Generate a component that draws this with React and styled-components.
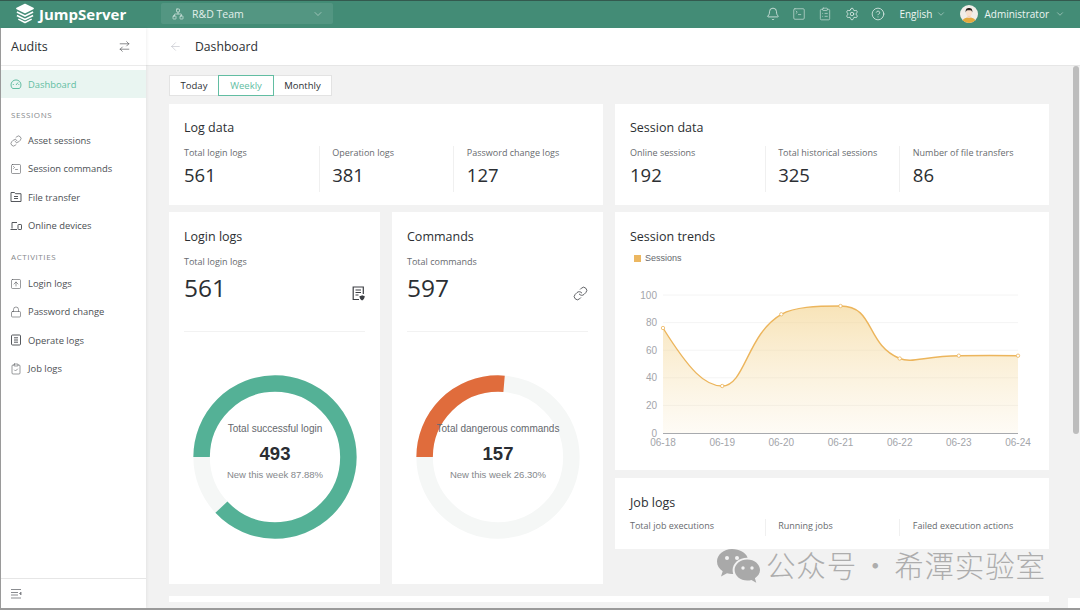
import styled, { createGlobalStyle } from "styled-components";
import {
  ArrowLeft,
  ArrowRightLeft,
  Bell,
  ChevronDown,
  CircleHelp,
  ClipboardCheck,
  ClipboardList,
  Link,
  Lock,
  Network,
  Settings,
  SquareArrowUp,
  SquareTerminal,
} from "lucide-react";

const GlobalStyle = createGlobalStyle`
  html, body {
    margin: 0;
    padding: 0;
    height: 100%;
    overflow: hidden;
    background: #f2f2f2;
  }
  * { box-sizing: border-box; }
  body {
    font-family: "Open Sans", "Noto Sans", sans-serif;
    color: #2c2f33;
  }
`;

const Frame = styled.div`
  position: relative;
  width: 1080px;
  height: 610px;
  display: flex;
  flex-direction: column;
  overflow: hidden;
  border-bottom: 2px solid #9a9a9a;
  background: #f2f2f2;
`;

const TopBar = styled.header`
  flex: 0 0 28px;
  display: flex;
  align-items: center;
  padding: 0 15px 2px 15px;
  background: #438c76;
  border-top: 1px solid #33594e;
  color: #fff;
`;

const Brand = styled.div`
  width: 146px;
  display: flex;
  align-items: center;
  gap: 4px;
  font-size: 15px;
  font-weight: 700;
`;

const TeamSelect = styled.div`
  width: 172px;
  height: 21px;
  display: flex;
  align-items: center;
  padding: 0 9px 0 11px;
  gap: 8px;
  border-radius: 2px;
  background: rgba(255, 255, 255, 0.09);
  font-size: 10.5px;
  color: #e2efeb;
  & span { flex: 1; }
`;

const TopActions = styled.div`
  margin-left: auto;
  display: flex;
  align-items: center;
`;

const TopIcon = styled.span`
  width: 26.4px;
  display: flex;
  justify-content: center;
  color: #e8f2ef;
`;

const TopText = styled.span`
  font-size: 10px;
  color: #eef6f3;
`;

const Lang = styled.div`
  display: flex;
  align-items: center;
  gap: 4px;
  margin-left: 8px;
  margin-right: 14px;
`;

const User = styled.div`
  display: flex;
  align-items: center;
  gap: 6px;
  & svg:last-child { margin-left: 0; }
`;

const Body = styled.div`
  flex: 1;
  min-height: 0;
  display: flex;
`;

const Sidebar = styled.aside`
  flex: 0 0 146px;
  display: flex;
  flex-direction: column;
  background: #fff;
  border-left: 1px solid #9a9a9a;
  box-shadow: 1px 0 3px rgba(0, 0, 0, 0.06);
  z-index: 1;
`;

const SideHead = styled.div`
  flex: 0 0 38px;
  display: flex;
  align-items: center;
  justify-content: space-between;
  padding: 0 15px 0 10px;
  border-bottom: 1px solid #ebebeb;
  font-size: 12.5px;
  color: #2c2f33;
`;

const SideNav = styled.nav`
  flex: 1;
  padding-top: 4px;
`;

const NavItem = styled.div`
  height: 28.4px;
  display: flex;
  align-items: center;
  gap: 6px;
  padding-left: 9px;
  font-size: 9.4px;
  color: ${(p) => (p.$active ? "#62bda2" : "#4c4f54")};
  background: ${(p) => (p.$active ? "#e9f5f1" : "transparent")};
`;

const NavGroup = styled.div`
  height: ${(p) => p.$h}px;
  display: flex;
  align-items: flex-end;
  padding: 0 0 ${(p) => p.$pb}px 10px;
  font-size: 8px;
  letter-spacing: 0.6px;
  color: #85888c;
`;

const SideFoot = styled.div`
  flex: 0 0 30px;
  display: flex;
  align-items: center;
  padding-left: 10px;
  border-top: 1px solid #e6e6e6;
`;

const Main = styled.main`
  flex: 1;
  min-width: 0;
  display: flex;
  flex-direction: column;
`;

const PageHead = styled.div`
  flex: 0 0 38px;
  display: flex;
  align-items: center;
  gap: 13px;
  padding-left: 23px;
  background: #fff;
  border-bottom: 1px solid #e6e6e6;
  font-size: 12.2px;
  color: #2c2f33;
`;

const Content = styled.div`
  flex: 1;
  min-height: 0;
  padding: 9px 31px 0 23px;
`;

const Tabs = styled.div`
  display: flex;
  height: 21px;
  margin-bottom: 8px;
`;

const Tab = styled.div`
  width: ${(p) => p.$w}px;
  display: flex;
  align-items: center;
  justify-content: center;
  font-size: 9.5px;
  background: #fff;
  color: ${(p) => (p.$active ? "#62bda2" : "#2c2f33")};
  border: 1px solid ${(p) => (p.$active ? "#62bda2" : "#e3e3e3")};
  margin-left: ${(p) => (p.$first ? 0 : -1)}px;
  position: relative;
  z-index: ${(p) => (p.$active ? 1 : 0)};
`;

const Columns = styled.div`
  display: grid;
  grid-template-columns: 434px 434px;
  gap: 12px;
`;

const Column = styled.div`
  display: flex;
  flex-direction: column;
  gap: 7px;
`;

const Card = styled.section`
  background: #fff;
  padding: ${(p) => p.$pt || 15}px 15px 15px;
  height: ${(p) => p.$h}px;
`;

const JobCard = styled(Card)`
  margin-top: 1px;
`;

const CardTitle = styled.h3`
  margin: 0;
  font-size: 12.5px;
  line-height: 17px;
  font-weight: 400;
  color: #2c2f33;
`;

const StatGrid = styled.div`
  display: grid;
  grid-template-columns: repeat(3, 1fr);
  margin-top: ${(p) => (p.$short ? 8 : 10)}px;
`;

const Stat = styled.div`
  height: ${(p) => (p.$short ? 17 : 46)}px;
  & + & {
    padding-left: 12.5px;
    border-left: 1px solid #f0f0f0;
  }
`;

const StatLabel = styled.div`
  font-size: 9px;
  line-height: 13px;
  color: #676a6e;
`;

const StatValue = styled.div`
  margin-top: 3px;
  font-size: 18.5px;
  line-height: 26px;
  color: #2c2f33;
`;

const DonutRow = styled.div`
  display: grid;
  grid-template-columns: 211px 211px;
  gap: 12px;
`;

const DonutHead = styled.div`
  position: relative;
  height: 104px;
  border-bottom: 1px solid #f2f2f2;
`;

const HeadLabel = styled(StatLabel)`
  margin-top: 10px;
`;

const BigValue = styled.div`
  margin-top: 3px;
  font-size: 24.5px;
  line-height: 34px;
  color: #2c2f33;
`;

const CornerIcon = styled.span`
  position: absolute;
  right: 0;
  top: 58px;
  display: flex;
  color: #3c3f44;
`;

const DonutWrap = styled.div`
  position: relative;
  width: 164px;
  height: 164px;
  margin: 43px auto 0;
  left: 0.5px;
`;

const DonutText = styled.div`
  position: absolute;
  inset: 0;
  padding-top: 2px;
  display: flex;
  flex-direction: column;
  align-items: center;
  justify-content: center;
  font-family: "Liberation Sans", Arial, sans-serif;
  white-space: nowrap;
`;

const DonutLabel = styled.div`
  font-size: 10px;
  line-height: 12px;
  color: #65686d;
  margin-top: -13px;
`;

const DonutNumber = styled.div`
  font-size: 18.5px;
  font-weight: 700;
  line-height: 22px;
  margin-top: 8px;
  color: #2a2d32;
`;

const DonutSub = styled.div`
  font-size: 9.5px;
  line-height: 12px;
  margin-top: 4px;
  color: #85888c;
`;

const Legend = styled.div`
  display: flex;
  align-items: center;
  gap: 4px;
  margin-top: 7px;
  font-family: "Liberation Sans", Arial, sans-serif;
  font-size: 9px;
  line-height: 12px;
  color: #65686d;
  & i {
    width: 7px;
    height: 7px;
    background: #ecb761;
    margin-left: 4px;
  }
`;

const ChartBox = styled.svg`
  display: block;
  margin: 11px 0 0 -15px;
  font-family: "Liberation Sans", Arial, sans-serif;
`;

const BottomCard = styled.div`
  height: 6px;
  margin-top: 12px;
  background: #fff;
`;

const ScrollThumb = styled.div`
  position: absolute;
  right: 1px;
  top: 66px;
  width: 6px;
  height: 368px;
  border-radius: 3px;
  background: #bdbdbd;
`;

const ScrollCorner = styled.div`
  position: absolute;
  right: 0;
  bottom: 0;
  width: 12px;
  height: 10px;
  background: #fff;
`;

const Watermark = styled.div`
  position: absolute;
  left: 717px;
  top: 542px;
  display: flex;
  align-items: center;
  gap: 6px;
  font-family: "Noto Sans CJK SC", sans-serif;
  font-weight: 300;
  font-size: 29.5px;
  letter-spacing: 0.85px;
  word-spacing: -4px;
  line-height: 40px;
  color: #adadad;
  white-space: nowrap;
  & svg { margin-top: 7px; }
`;

const iconProps = { strokeWidth: 1.3 };
const navIconProps = { size: 12, strokeWidth: 1.2 };

const LogoMark = () => (
  <svg width="20" height="21" viewBox="0 0 21 21" fill="none" stroke="#fff" strokeWidth="1.7" strokeLinejoin="round">
    <path d="M10.5 1 19 5.200 10.500 9.400 2 5.200Z" fill="#fff" />
    <path d="M2 9 10.500 13.200 19 9" />
    <path d="M2 12.600 10.500 16.800 19 12.600" />
    <path d="M3.500 16.400 10.500 20 17.500 16.400" />
  </svg>
);

const Avatar = () => (
  <svg width="18" height="18" viewBox="0 0 18 18">
    <clipPath id="av">
      <circle cx="9" cy="9" r="9" />
    </clipPath>
    <g clipPath="url(#av)">
      <rect width="18" height="18" fill="#f1ede8" />
      <path d="M2 18c0-4 3-5.500 7-5.500s7 1.500 7 5.500Z" fill="#e3a93e" />
      <rect x="7.500" y="9.500" width="3" height="3.500" fill="#f3d2bb" />
      <ellipse cx="9" cy="7.500" rx="3" ry="3.600" fill="#f8e0cf" />
      <path d="M5.700 7.500C5.300 3.800 7 3 9 3s3.700.8 3.300 4.500c-.4-1.600-1-2.300-1.800-2.300H7.500c-.8 0-1.400.7-1.800 2.300Z" fill="#2b2320" />
    </g>
  </svg>
);

const DashIcon = ({ color }) => (
  <svg width="12" height="12" viewBox="0 0 12 12" fill="none" stroke={color} strokeWidth="1">
    <path d="M2.500 10.500a5 5 0 1 1 7 0Z" strokeLinejoin="round" />
    <path d="M6 7 8 4.500M2.800 6.500H3.800M8.400 6.500H9.300" />
  </svg>
);

const FolderIcon = ({ color }) => (
  <svg width="12" height="12" viewBox="0 0 12 12" fill="none" stroke={color} strokeWidth="1">
    <path d="M1 1.500H4.500L5.500 2.700H11V10.500H1Z" strokeLinejoin="round" />
    <path d="M4 5.500H8M4 7.500H8" />
  </svg>
);

const DevicesIcon = ({ color }) => (
  <svg width="12" height="12" viewBox="0 0 12 12" fill="none" stroke={color} strokeWidth="1">
    <path d="M7 2.500H2V8.500M0.500 9.500H7" />
    <rect x="8" y="4.500" width="3.500" height="5" rx="0.600" />
  </svg>
);

const OperateIcon = ({ color }) => (
  <svg width="12" height="12" viewBox="0 0 12 12" fill="none" stroke={color} strokeWidth="1">
    <rect x="1.500" y="1" width="9" height="10" rx="1" />
    <path d="M4 3.800H8M4 6H8M4 8.200H8" />
  </svg>
);

const CollapseIcon = () => (
  <svg width="11" height="11" viewBox="0 0 11 11" fill="none" stroke="#8a8c90" strokeWidth="1">
    <path d="M0 1.500H10M0 4.500H7M0 7H7M0 10H10" />
    <path d="M10 4 8.500 5.500 10 7Z" fill="#6c6f74" />
  </svg>
);

const LogBadgeIcon = () => (
  <svg width="13" height="15" viewBox="0 0 13 15" fill="none" stroke="#3c3f44" strokeWidth="1.200">
    <path d="M7 13.500H1.200V1H11.300V8" />
    <path d="M3.500 4H9M3.500 6.500H9M3.500 9H6.500" />
    <path d="M7.500 10c1.300 0 2.200-.4 2.700-.8.500.4 1.400.8 2.500.8 0 2-1 3.800-2.600 4.500C8.500 13.800 7.500 12 7.500 10Z" fill="#3c3f44" stroke="none" />
  </svg>
);

const WeChatIcon = () => (
  <svg width="43" height="36" viewBox="0 0 43 36" fill="#a9a9a9">
    <path d="M15 0C6.700 0 0 5.600 0 12.500c0 4 2.200 7.400 5.700 9.700L4 27.500l6-3.200c1.600.5 3.300.7 5 .7l1.200-.1c-.4-1.200-.6-2.500-.6-3.800 0-6.900 6.500-12.400 14.400-12.400h.6C28.900 3.500 22.600 0 15 0Z" />
    <path d="M43 21c0-5.800-5.700-10.500-12.700-10.500S17.600 15.200 17.600 21s5.700 10.500 12.700 10.500c1.400 0 2.800-.2 4.100-.6l4.900 2.900-1.400-4.500C40.900 27.300 43 24.300 43 21Z" />
    <circle cx="10" cy="9" r="2" fill="#f2f2f2" />
    <circle cx="20" cy="9" r="2" fill="#f2f2f2" />
    <circle cx="26" cy="19" r="1.700" fill="#f2f2f2" />
    <circle cx="35" cy="19" r="1.700" fill="#f2f2f2" />
  </svg>
);

const Donut = ({ color, percent, label, value }) => {
  const r = 73.4;
  const circumference = 2 * Math.PI * r;
  return (
    <DonutWrap>
      <svg width="164" height="164" viewBox="0 0 164 164" fill="none">
        <circle cx="82" cy="82" r={r} stroke="#f5f7f6" strokeWidth="16.500" />
        <circle
          cx="82"
          cy="82"
          r={r}
          stroke={color}
          strokeWidth="16.500"
          strokeDasharray={`${(circumference * percent) / 100} ${circumference}`}
          transform="rotate(180 82 82)"
        />
      </svg>
      <DonutText>
        <DonutLabel>{label}</DonutLabel>
        <DonutNumber>{value}</DonutNumber>
        <DonutSub>New this week {percent.toFixed(2)}%</DonutSub>
      </DonutText>
    </DonutWrap>
  );
};

const chartLine =
  "M663 329C690 372 705 387 722.200 387C745 387 747 335 781.300 315.300C795 308 815 307 840.500 307C875 307 865 345 899.700 359.500C912 364.500 925 357 958.800 356.700C980 356.500 1000 356.500 1018 356.700";
const chartPoints = [
  [663, 329],
  [722.2, 387],
  [781.3, 315.3],
  [840.5, 307],
  [899.7, 359.5],
  [958.8, 356.7],
  [1018, 356.7],
];
const chartDates = ["06-18", "06-19", "06-20", "06-21", "06-22", "06-23", "06-24"];

const TrendChart = () => (
  <ChartBox width="434" height="188" viewBox="615 276 434 188">
    <defs>
      <linearGradient id="area" x1="0" y1="0" x2="0" y2="1">
        <stop offset="0" stopColor="#f3d38d" stopOpacity="0.62" />
        <stop offset="1" stopColor="#f6dfae" stopOpacity="0.12" />
      </linearGradient>
    </defs>
    {[100, 80, 60, 40, 20].map((v) => (
      <line key={v} x1="663" x2="1018" y1={434 - v * 1.38} y2={434 - v * 1.38} stroke="#f4f4f4" />
    ))}
    {[0, 20, 40, 60, 80, 100].map((v) => (
      <text key={v} x="657" y={437.5 - v * 1.38} textAnchor="end" fontSize="10" fill="#a3a5aa">
        {v}
      </text>
    ))}
    <path d={`${chartLine}L1018 434L663 434Z`} fill="url(#area)" />
    <path d={chartLine} fill="none" stroke="#ecb55c" strokeWidth="1.400" />
    <line x1="663" x2="1018" y1="434.500" y2="434.500" stroke="#a8aaae" />
    {chartPoints.map(([x, y]) => (
      <circle key={x} cx={x} cy={y} r="1.700" fill="#fff" stroke="#ecb55c" strokeWidth="0.800" />
    ))}
    {chartDates.map((d, i) => (
      <text key={d} x={chartPoints[i][0]} y="447" textAnchor="middle" fontSize="10" fill="#a3a5aa">
        {d}
      </text>
    ))}
  </ChartBox>
);

const StatCard = ({ title, stats }) => (
  <Card $h={101}>
    <CardTitle>{title}</CardTitle>
    <StatGrid>
      {stats.map(([label, value]) => (
        <Stat key={label}>
          <StatLabel>{label}</StatLabel>
          <StatValue>{value}</StatValue>
        </Stat>
      ))}
    </StatGrid>
  </Card>
);

const LinkIcon = ({ color }) => <Link {...navIconProps} color={color} />;
const TerminalIcon = ({ color }) => <SquareTerminal {...navIconProps} color={color} />;
const LoginIcon = ({ color }) => <SquareArrowUp {...navIconProps} color={color} />;
const LockIcon = ({ color }) => <Lock {...navIconProps} color={color} />;
const JobIcon = ({ color }) => <ClipboardCheck {...navIconProps} color={color} />;

const sessionsNav = [
  [LinkIcon, "Asset sessions"],
  [TerminalIcon, "Session commands"],
  [FolderIcon, "File transfer"],
  [DevicesIcon, "Online devices"],
];

const activityNav = [
  [LoginIcon, "Login logs"],
  [LockIcon, "Password change"],
  [OperateIcon, "Operate logs"],
  [JobIcon, "Job logs"],
];

const NavEntry = ({ icon: Icon, label }) => (
  <NavItem>
    <Icon color="#55585d" />
    {label}
  </NavItem>
);

export default function App() {
  return (
    <Frame>
      <GlobalStyle />
      <TopBar>
        <Brand>
          <LogoMark />
          JumpServer
        </Brand>
        <TeamSelect>
          <Network size={12} {...iconProps} />
          <span>R&amp;D Team</span>
          <ChevronDown size={12} strokeWidth={1} />
        </TeamSelect>
        <TopActions>
          <TopIcon>
            <Bell size={14} {...iconProps} />
          </TopIcon>
          <TopIcon>
            <SquareTerminal size={14} {...iconProps} opacity={0.75} />
          </TopIcon>
          <TopIcon>
            <ClipboardList size={14} {...iconProps} opacity={0.75} />
          </TopIcon>
          <TopIcon>
            <Settings size={14} {...iconProps} />
          </TopIcon>
          <TopIcon>
            <CircleHelp size={14} {...iconProps} />
          </TopIcon>
          <Lang>
            <TopText>English</TopText>
            <ChevronDown size={10} strokeWidth={1} />
          </Lang>
          <User>
            <Avatar />
            <TopText>Administrator</TopText>
            <ChevronDown size={10} strokeWidth={1} />
          </User>
        </TopActions>
      </TopBar>
      <Body>
        <Sidebar>
          <SideHead>
            Audits
            <ArrowRightLeft size={13} strokeWidth={1.1} color="#3c3f44" />
          </SideHead>
          <SideNav>
            <NavItem $active>
              <DashIcon color="#62bda2" />
              Dashboard
            </NavItem>
            <NavGroup $h={28} $pb={6}>SESSIONS</NavGroup>
            {sessionsNav.map(([icon, label]) => (
              <NavEntry key={label} icon={icon} label={label} />
            ))}
            <NavGroup $h={29.4} $pb={7}>ACTIVITIES</NavGroup>
            {activityNav.map(([icon, label]) => (
              <NavEntry key={label} icon={icon} label={label} />
            ))}
          </SideNav>
          <SideFoot>
            <CollapseIcon />
          </SideFoot>
        </Sidebar>
        <Main>
          <PageHead>
            <ArrowLeft size={13} strokeWidth={1} color="#b4b6c0" />
            Dashboard
          </PageHead>
          <Content>
            <Tabs>
              <Tab $first $w={50}>
                Today
              </Tab>
              <Tab $active $w={56}>
                Weekly
              </Tab>
              <Tab $w={59}>Monthly</Tab>
            </Tabs>
            <Columns>
              <Column>
                <StatCard
                  title="Log data"
                  stats={[
                    ["Total login logs", 561],
                    ["Operation logs", 381],
                    ["Password change logs", 127],
                  ]}
                />
                <DonutRow>
                  <Card $h={372} $pt={16}>
                    <DonutHead>
                      <CardTitle>Login logs</CardTitle>
                      <HeadLabel>Total login logs</HeadLabel>
                      <BigValue>561</BigValue>
                      <CornerIcon>
                        <LogBadgeIcon />
                      </CornerIcon>
                    </DonutHead>
                    <Donut color="#54b196" percent={87.88} label="Total successful login" value="493" />
                  </Card>
                  <Card $h={372} $pt={16}>
                    <DonutHead>
                      <CardTitle>Commands</CardTitle>
                      <HeadLabel>Total commands</HeadLabel>
                      <BigValue>597</BigValue>
                      <CornerIcon>
                        <Link size={15} strokeWidth={1.3} />
                      </CornerIcon>
                    </DonutHead>
                    <Donut color="#e06c3c" percent={26.3} label="Total dangerous commands" value="157" />
                  </Card>
                </DonutRow>
              </Column>
              <Column>
                <StatCard
                  title="Session data"
                  stats={[
                    ["Online sessions", 192],
                    ["Total historical sessions", 325],
                    ["Number of file transfers", 86],
                  ]}
                />
                <Card $h={258} $pt={16}>
                  <CardTitle>Session trends</CardTitle>
                  <Legend>
                    <i />
                    Sessions
                  </Legend>
                  <TrendChart />
                </Card>
                <JobCard $h={71} $pt={16}>
                  <CardTitle>Job logs</CardTitle>
                  <StatGrid $short>
                    <Stat $short>
                      <StatLabel>Total job executions</StatLabel>
                    </Stat>
                    <Stat $short>
                      <StatLabel>Running jobs</StatLabel>
                    </Stat>
                    <Stat $short>
                      <StatLabel>Failed execution actions</StatLabel>
                    </Stat>
                  </StatGrid>
                </JobCard>
              </Column>
            </Columns>
            <BottomCard />
          </Content>
        </Main>
      </Body>
      <ScrollThumb />
      <ScrollCorner />
      <Watermark>
        <WeChatIcon />
        公众号 · 希潭实验室
      </Watermark>
    </Frame>
  );
}
